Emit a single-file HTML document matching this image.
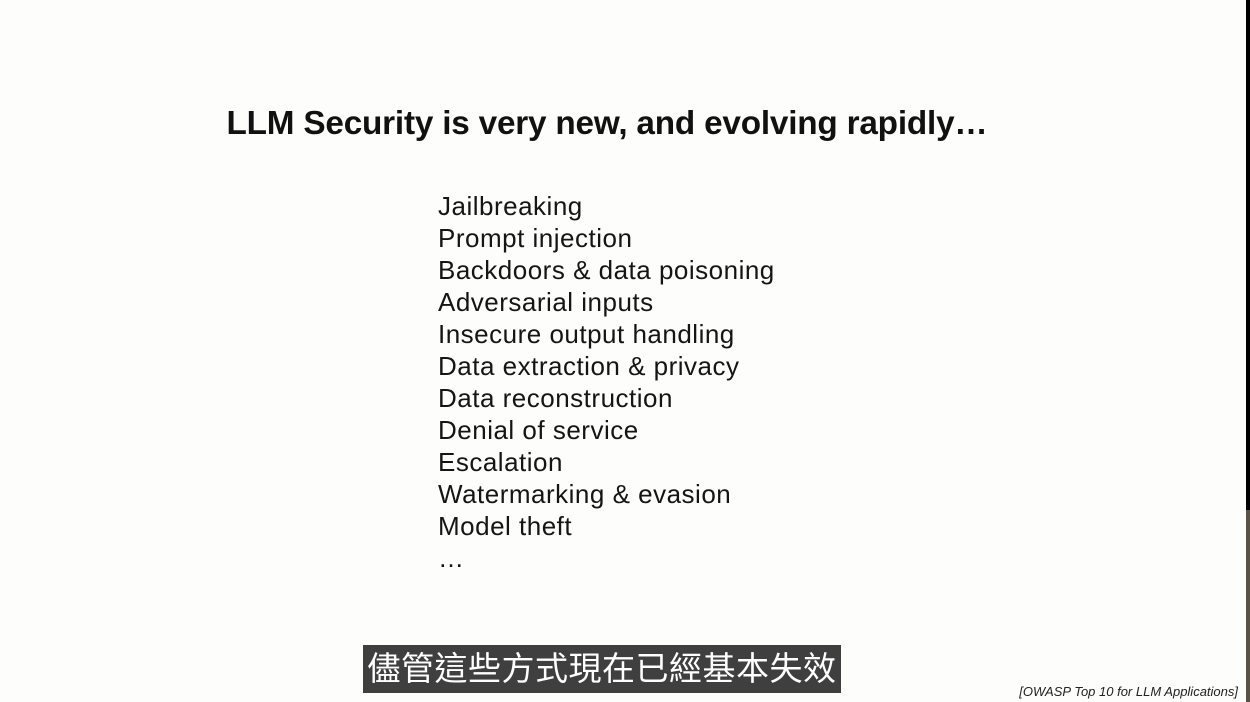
<!DOCTYPE html>
<html><head><meta charset="utf-8"><style>
html,body{margin:0;padding:0}
body{width:1250px;height:702px;position:relative;overflow:hidden;background:#fdfdfc;font-family:"Liberation Sans",Arial,sans-serif;color:#111}
.title{position:absolute;left:0;width:1214px;top:105px;text-align:center;font-weight:bold;font-size:33.3px;letter-spacing:-0.2px}
.list{position:absolute;left:438px;top:190px;font-size:26px;letter-spacing:0.5px;line-height:32px;color:#151515}
.sub{position:absolute;left:363px;top:645px;width:478px;height:48px;background:#3f3f3f;color:#fff;font-family:"Liberation Sans","Noto Sans CJK TC",sans-serif;font-size:33px;line-height:48px;text-align:center;letter-spacing:0.5px}
.cite{position:absolute;right:12px;top:684px;font-size:13px;font-style:italic;color:#222}
.edge{position:absolute;left:1246px;top:0;width:4px;height:510px;background:#000}
.edge2{position:absolute;left:1246px;top:510px;width:4px;height:192px;background:#5a5247}
</style></head><body>
<div class="title">LLM Security is very new, and evolving rapidly…</div>
<div class="list">Jailbreaking<br>Prompt injection<br>Backdoors &amp; data poisoning<br>Adversarial inputs<br>Insecure output handling<br>Data extraction &amp; privacy<br>Data reconstruction<br>Denial of service<br>Escalation<br>Watermarking &amp; evasion<br>Model theft<br>…</div>
<div class="sub">儘管這些方式現在已經基本失效</div>
<div class="cite">[OWASP Top 10 for LLM Applications]</div>
<div class="edge"></div><div class="edge2"></div>
</body></html>
